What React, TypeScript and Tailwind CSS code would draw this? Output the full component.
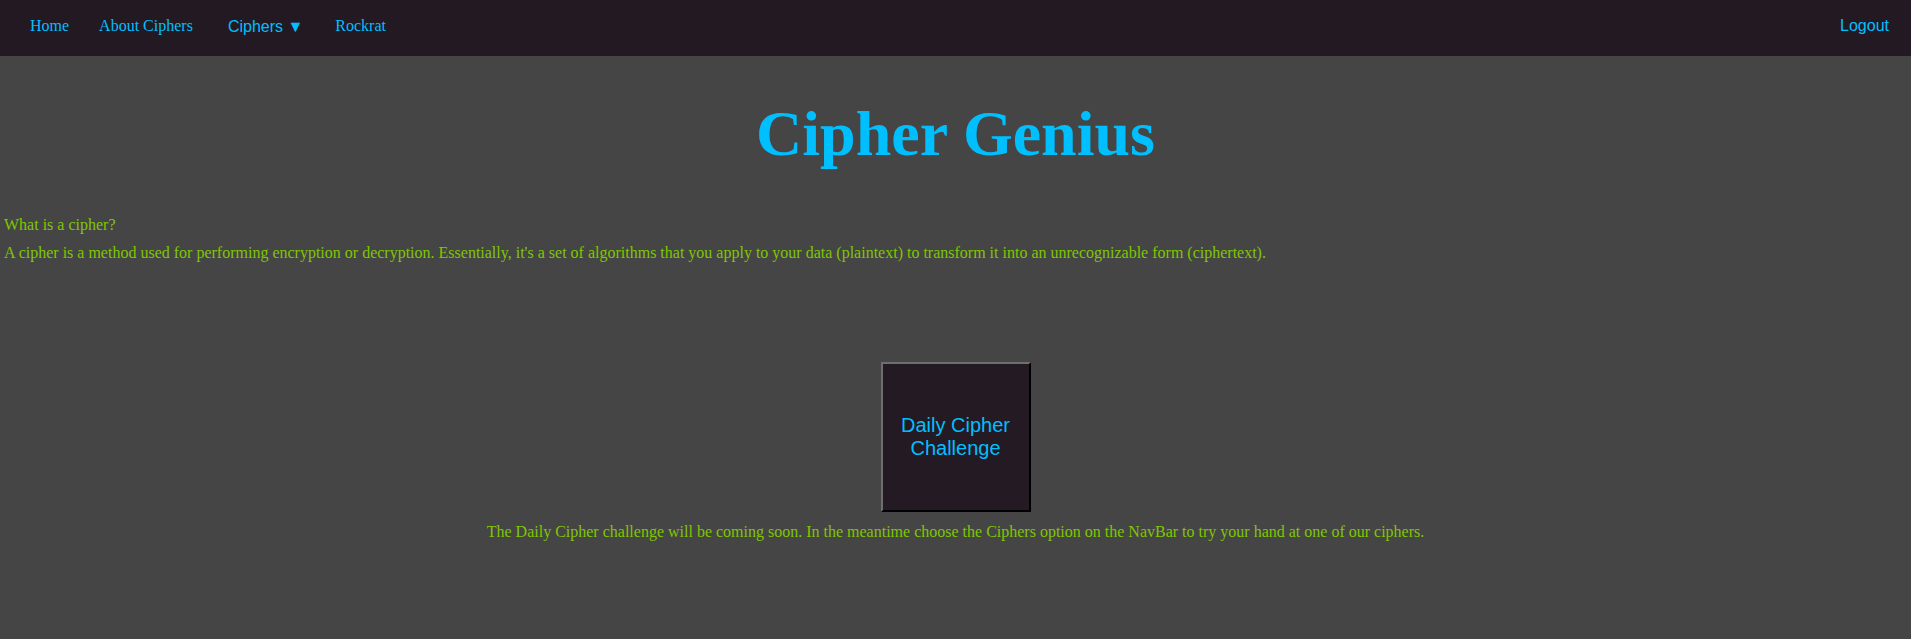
import { useState } from 'react'

const serif = "font-['Liberation_Serif','Times_New_Roman',serif]"
const sans = "font-['Liberation_Sans',Arial,sans-serif]"

function NavBar() {
  const [open, setOpen] = useState(false)

  return (
    <nav className="h-[56px] bg-[#231923] flex items-center justify-between pb-[4px] pl-[30px] pr-[22px] text-[16px] text-[#00bfff]">
      <div className="flex items-center">
        <a href="#" className={`${serif} leading-normal`}>
          Home
        </a>
        <a href="#" className={`${serif} leading-normal ml-[30px]`}>
          About Ciphers
        </a>
        <div className="relative ml-[35px]">
          <button
            onClick={() => setOpen(!open)}
            className={`${sans} leading-normal text-[#00bfff]`}
          >
            Ciphers ▼
          </button>
        </div>
        <a href="#" className={`${serif} leading-normal ml-[32px]`}>
          Rockrat
        </a>
      </div>
      <a href="#" className={`${sans} leading-normal`}>
        Logout
      </a>
    </nav>
  )
}

export default function App() {
  return (
    <div className="min-h-screen bg-[#454545]">
      <NavBar />

      <h1
        className={`${serif} text-[64px] font-bold leading-normal text-center text-[#00bfff] mt-[30px]`}
      >
        Cipher Genius
      </h1>

      <div className={`${serif} text-[16px] leading-normal text-[#7fc700] pl-[4px] mt-[31px]`}>
        <p>What is a cipher?</p>
        <p className="mt-[4px]">
          A cipher is a method used for performing encryption or decryption. Essentially, it's a set of
          algorithms that you apply to your data (plaintext) to transform it into an unrecognizable form
          (ciphertext).
        </p>
      </div>

      <div className="flex flex-col items-center mt-[97px]">
        <button
          className={`${sans} w-[150px] h-[150px] bg-[#231a23] border-2 border-t-[#6e6e6e] border-l-[#6e6e6e] border-b-black border-r-black text-[20px] leading-[23px] text-[#00bfff] flex items-center justify-center text-center`}
        >
          Daily Cipher
          <br />
          Challenge
        </button>
        <p className={`${serif} text-[16px] leading-normal text-[#7fc700] text-center mt-[8px]`}>
          The Daily Cipher challenge will be coming soon. In the meantime choose the Ciphers option on the
          NavBar to try your hand at one of our ciphers.
        </p>
      </div>
    </div>
  )
}
